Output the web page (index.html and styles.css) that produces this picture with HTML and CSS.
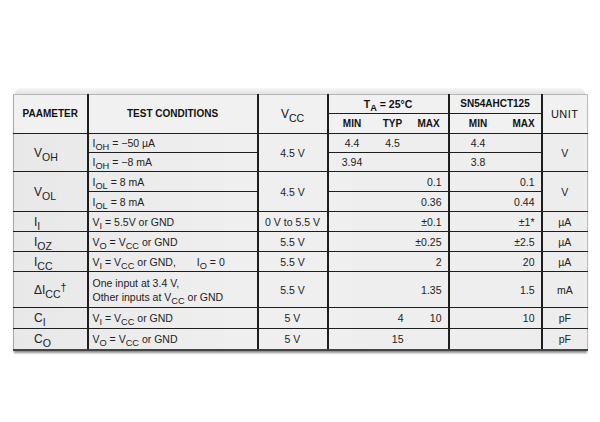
FILE: index.html
```html
<!DOCTYPE html>
<html>
<head>
<meta charset="utf-8">
<link rel="stylesheet" href="styles.css">
</head>
<body>
<div class="page">
  <div class="box">
    <div class="lid"></div>
    <table class="spec">
      <colgroup>
        <col class="c-param"><col class="c-test"><col class="c-vcc">
        <col class="c-tmin"><col class="c-ttyp"><col class="c-tmax">
        <col class="c-smin"><col class="c-smax"><col class="c-unit">
      </colgroup>
      <tr class="h1">
        <th rowspan="2" class="first hb">PAAMETER</th>
        <th rowspan="2" class="vl hb">TEST CONDITIONS</th>
        <th rowspan="2" class="vl vcc">V<sub>CC</sub></th>
        <th colspan="3" class="vl ta">T<sub>A</sub> = 25°C</th>
        <th colspan="2" class="vl hb">SN54AHCT125</th>
        <th rowspan="2" class="vl unit-h last">UNIT</th>
      </tr>
      <tr class="h2">
        <th class="vl">MIN</th><th>TYP</th><th>MAX</th>
        <th class="vl">MIN</th><th>MAX</th>
      </tr>
      <tr class="r19">
        <td rowspan="2" class="first p">V<sub>OH</sub></td>
        <td class="vl t">I<sub>OH</sub> = −50 µA</td>
        <td rowspan="2" class="vl c">4.5 V</td>
        <td class="vl c">4.4</td><td class="c">4.5</td><td></td>
        <td class="vl c">4.4</td><td></td>
        <td rowspan="2" class="vl c last">V</td>
      </tr>
      <tr class="r19">
        <td class="vl t">I<sub>OH</sub> = −8 mA</td>
        <td class="vl c">3.94</td><td></td><td></td>
        <td class="vl c">3.8</td><td></td>
      </tr>
      <tr class="r20">
        <td rowspan="2" class="first p">V<sub>OL</sub></td>
        <td class="vl t">I<sub>OL</sub> = 8 mA</td>
        <td rowspan="2" class="vl c">4.5 V</td>
        <td class="vl"></td><td></td><td class="r">0.1</td>
        <td class="vl"></td><td class="r">0.1</td>
        <td rowspan="2" class="vl c last">V</td>
      </tr>
      <tr class="r20">
        <td class="vl t">I<sub>OL</sub> = 8 mA</td>
        <td class="vl"></td><td></td><td class="r">0.36</td>
        <td class="vl"></td><td class="r">0.44</td>
      </tr>
      <tr class="r20">
        <td class="first p">I<sub>I</sub></td>
        <td class="vl t">V<sub>I</sub> = 5.5V or GND</td>
        <td class="vl c">0 V to 5.5 V</td>
        <td class="vl"></td><td></td><td class="r">±0.1</td>
        <td class="vl"></td><td class="r">±1*</td>
        <td class="vl c last">µA</td>
      </tr>
      <tr class="r20">
        <td class="first p">I<sub>OZ</sub></td>
        <td class="vl t">V<sub>O</sub> = V<sub>CC</sub> or GND</td>
        <td class="vl c">5.5 V</td>
        <td class="vl"></td><td></td><td class="r">±0.25</td>
        <td class="vl"></td><td class="r">±2.5</td>
        <td class="vl c last">µA</td>
      </tr>
      <tr class="r20">
        <td class="first p">I<sub>CC</sub></td>
        <td class="vl t">V<sub>I</sub> = V<sub>CC</sub> or GND,<span class="gap">I<sub>O</sub> = 0</span></td>
        <td class="vl c">5.5 V</td>
        <td class="vl"></td><td></td><td class="r">2</td>
        <td class="vl"></td><td class="r">20</td>
        <td class="vl c last">µA</td>
      </tr>
      <tr class="r36">
        <td class="first p">ΔI<sub>CC</sub><sup>†</sup></td>
        <td class="vl t two">One input at 3.4 V,<br>Other inputs at V<sub>CC</sub> or GND</td>
        <td class="vl c">5.5 V</td>
        <td class="vl"></td><td></td><td class="r">1.35</td>
        <td class="vl"></td><td class="r">1.5</td>
        <td class="vl c last">mA</td>
      </tr>
      <tr class="r21">
        <td class="first p">C<sub>I</sub></td>
        <td class="vl t">V<sub>I</sub> = V<sub>CC</sub> or GND</td>
        <td class="vl c">5 V</td>
        <td class="vl"></td><td class="r">4</td><td class="r">10</td>
        <td class="vl"></td><td class="r">10</td>
        <td class="vl c last">pF</td>
      </tr>
      <tr class="r21 lastrow">
        <td class="first p">C<sub>O</sub></td>
        <td class="vl t">V<sub>O</sub> = V<sub>CC</sub> or GND</td>
        <td class="vl c">5 V</td>
        <td class="vl"></td><td class="r">15</td><td></td>
        <td class="vl"></td><td></td>
        <td class="vl c last">pF</td>
      </tr>
    </table>
  </div>
</div>
</body>
</html>
```
FILE: styles.css
```css
html, body {
  margin: 0;
  padding: 0;
  background: #ffffff;
}
.page {
  width: 600px;
  height: 422px;
  padding: 88px 13px 0 13px;
  box-sizing: border-box;
  font-family: "Liberation Sans", Arial, sans-serif;
  color: #222;
}
.box {
  width: 574px;
}
.lid {
  height: 6px;
  margin: 0 2px;
  border-radius: 5px 5px 0 0;
  background: linear-gradient(to bottom, #f7f7f7, #e2e2e2);
}
.spec {
  width: 574px;
  border-collapse: collapse;
  table-layout: fixed;
  background: linear-gradient(to right, #e8e8e8, #efefef 40%, #ededed);
  box-shadow: 0 3px 2px -1px rgba(0, 0, 0, 0.45);
}
.c-param { width: 74px; }
.c-test { width: 170px; }
.c-vcc { width: 70px; }
.c-tmin { width: 48px; }
.c-ttyp { width: 34px; }
.c-tmax { width: 39px; }
.c-smin { width: 58px; }
.c-smax { width: 35px; }
.c-unit { width: 46px; }

th, td {
  padding: 0;
  border-top: 1.5px solid #1e1e1e;
  border-bottom: 1.5px solid #1e1e1e;
  font-size: 10.5px;
  line-height: 12px;
  white-space: nowrap;
  overflow: visible;
}
.spec tr.h1 th {
  border-top: 1px solid #b5b5b5;
}
.vl { border-left: 2px solid #1e1e1e; }
.first { border-left: 1px solid #a8a8a8; }
.last { border-right: 1px solid #bdbdbd; }
.lastrow td { border-bottom: 2px solid #444; }

th {
  background: #f1f1f1;
  color: #111;
  font-weight: bold;
  font-size: 10px;
  text-align: center;
}
.h1 { height: 19px; }
.h2 { height: 20px; }
.h1 th.hb { vertical-align: middle; }
.h1 th.vcc {
  font-weight: normal;
  font-size: 12px;
}
.h1 th.ta { font-size: 10.5px; }
.h1 th.unit-h {
  font-weight: normal;
  font-size: 11px;
  letter-spacing: 0.5px;
}
.r19 { height: 19px; }
.r20 { height: 20px; }
.r21 { height: 21px; }
.r36 { height: 36px; }

td.p {
  padding-left: 20px;
  font-size: 12px;
}
td.t { padding-left: 4px; }
td.two { line-height: 14px; }
td.c { text-align: center; }
td.r {
  text-align: right;
  padding-right: 6px;
}
sub {
  font-size: 0.88em;
  vertical-align: -0.35em;
  line-height: 0;
}
sup {
  font-size: 0.9em;
  vertical-align: 0.3em;
  line-height: 0;
}
.gap { margin-left: 21px; }
```
